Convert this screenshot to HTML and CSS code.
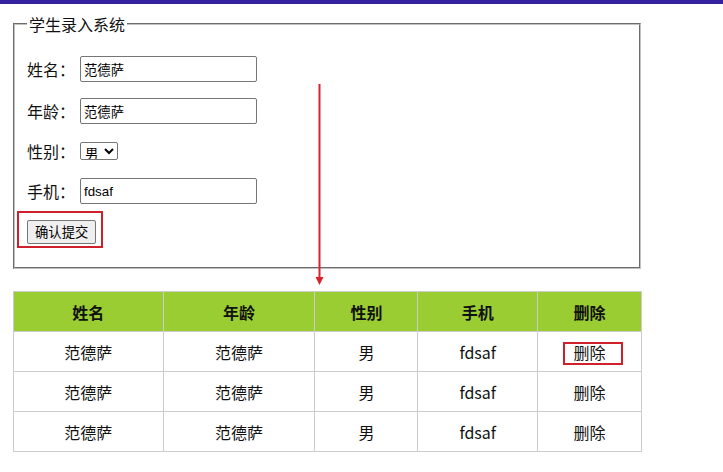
FILE: index.html
```html
<!DOCTYPE html>
<html lang="zh">
<head>
<meta charset="utf-8">
<title>学生录入系统</title>
<link rel="stylesheet" href="styles.css">
</head>
<body>
<div class="topbar"></div>
<main class="page">
  <fieldset class="form-box">
    <legend class="legend">学生录入系统</legend>
    <div class="row">
      <label class="label">姓名：</label>
      <input class="text-input" type="text" value="范德萨">
    </div>
    <div class="row">
      <label class="label">年龄：</label>
      <input class="text-input" type="text" value="范德萨">
    </div>
    <div class="row">
      <label class="label">性别：</label>
      <select class="select">
        <option>男</option>
        <option>女</option>
      </select>
    </div>
    <div class="row">
      <label class="label">手机：</label>
      <input class="text-input" type="text" value="fdsaf">
    </div>
    <div class="row row-last">
      <button class="submit" type="button">确认提交</button>
      <span class="mark mark-button"></span>
    </div>
    <svg class="arrow" width="12" height="202" viewBox="0 0 12 202">
      <rect x="4.5" y="0" width="2" height="196" fill="#d8232c"/>
      <polygon points="1.5,193 9.5,193 5.5,201" fill="#d8232c"/>
    </svg>
  </fieldset>

  <table class="list">
    <thead>
      <tr>
        <th class="c1">姓名</th>
        <th class="c2">年龄</th>
        <th class="c3">性别</th>
        <th class="c4">手机</th>
        <th class="c5">删除</th>
      </tr>
    </thead>
    <tbody>
      <tr>
        <td>范德萨</td>
        <td>范德萨</td>
        <td>男</td>
        <td>fdsaf</td>
        <td class="del-cell">删除<span class="mark mark-del"></span></td>
      </tr>
      <tr>
        <td>范德萨</td>
        <td>范德萨</td>
        <td>男</td>
        <td>fdsaf</td>
        <td>删除</td>
      </tr>
      <tr>
        <td>范德萨</td>
        <td>范德萨</td>
        <td>男</td>
        <td>fdsaf</td>
        <td>删除</td>
      </tr>
    </tbody>
  </table>
</main>
</body>
</html>
```

FILE: styles.css
```css
* {
  box-sizing: border-box;
}

html, body {
  margin: 0;
  padding: 0;
  background: #ffffff;
}

body {
  font-family: "Noto Sans CJK SC", "Liberation Sans", sans-serif;
  color: #111;
}

.topbar {
  height: 4px;
  background: #33229e;
}

.page {
  padding-left: 13px;
}

.form-box {
  position: relative;
  width: 628px;
  margin: 10px 0 0 0;
  padding: 22px 12px 23px 12px;
  border: 2px groove #c0c0c0;
}

.legend {
  font-size: 16px;
  line-height: 20px;
  padding: 0 2px;
}

.row {
  position: relative;
  display: flex;
  align-items: center;
  min-height: 22px;
  margin-bottom: 16px;
}

.row-last {
  margin-bottom: 0;
}

.label {
  width: 53px;
  font-size: 16px;
  line-height: 22px;
}

.text-input {
  width: 177px;
  height: 26px;
  padding: 1px 3px;
  font-family: "Noto Sans CJK SC", "Liberation Sans", sans-serif;
  font-size: 13.33px;
  color: #000;
  border: 1px solid #767676;
  border-radius: 2px;
  background: #fff;
}

.text-input[value="fdsaf"] {
  font-family: "Liberation Sans", "Noto Sans CJK SC", sans-serif;
}

.select {
  width: 38px;
  height: 18px;
  padding: 0;
  font-family: "Noto Sans CJK SC", sans-serif;
  font-size: 13.33px;
  border: 1px solid #767676;
  border-radius: 2px;
  background: #fff;
  color: #000;
}

.submit {
  height: 24px;
  padding: 0 7px;
  font-family: "Noto Sans CJK SC", sans-serif;
  font-size: 13.33px;
  line-height: 20px;
  color: #000;
  background: #efefef;
  border: 1px solid #767676;
  border-radius: 2px;
}

.mark {
  position: absolute;
  border: 2px solid #d0212b;
  pointer-events: none;
}

.mark-button {
  left: -10px;
  top: -9px;
  width: 86px;
  height: 37px;
}

.arrow {
  position: absolute;
  left: 299px;
  top: 50px;
}

.list {
  width: 629px;
  margin-top: 22px;
  border-collapse: collapse;
  font-size: 16px;
}

.list th,
.list td {
  height: 40px;
  padding: 0;
  text-align: center;
  border: 1px solid #cccccc;
}

.list th {
  background: #9acd32;
  font-weight: bold;
}

.c1 { width: 150px; }
.c2 { width: 152px; }
.c3 { width: 103px; }
.c4 { width: 120px; }
.c5 { width: 104px; }

.del-cell {
  position: relative;
}

.mark-del {
  left: 25px;
  top: 10px;
  width: 60px;
  height: 23px;
}
```
